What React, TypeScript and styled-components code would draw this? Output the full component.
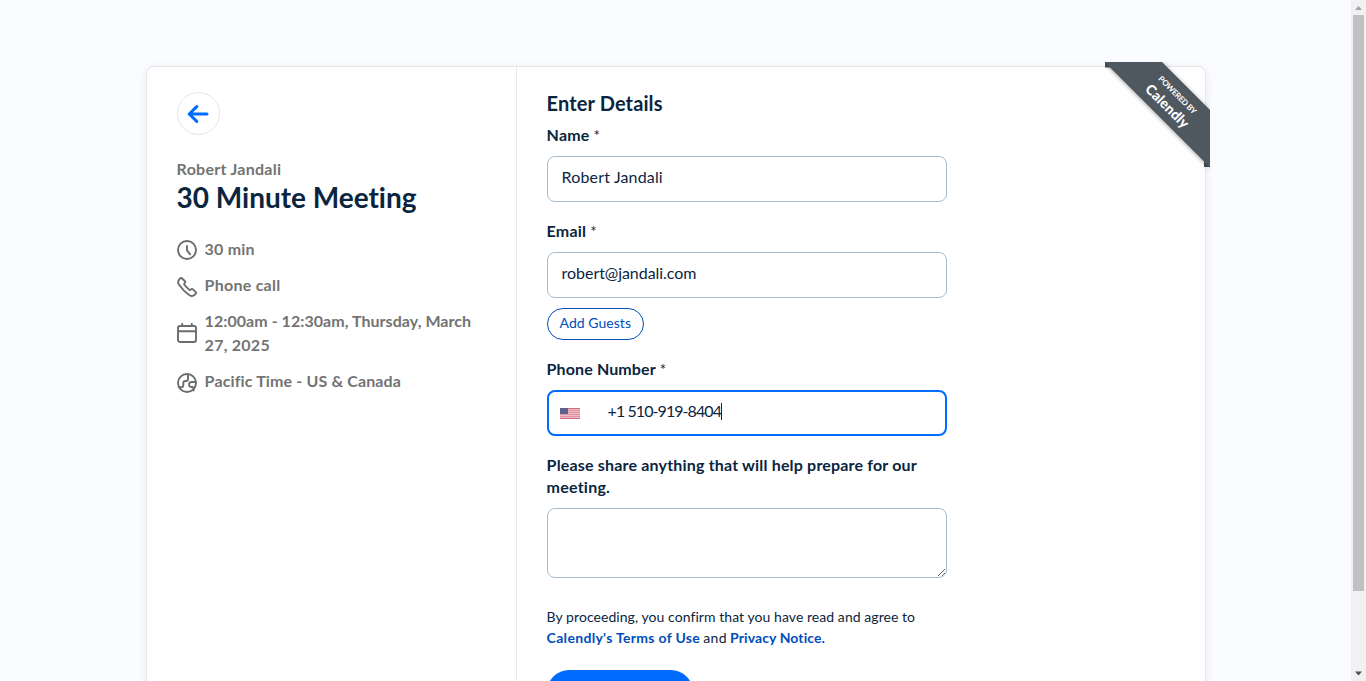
import React from "react";
import styled, { createGlobalStyle } from "styled-components";

const GlobalStyle = createGlobalStyle`
  *, *::before, *::after { box-sizing: border-box; }
  html, body { margin: 0; padding: 0; background: #fbfcff; overflow: hidden; }
  body { font-family: Lato, "Open Sans", sans-serif; font-size: 16px; color: #0b2540; }
`;

const Viewport = styled.div`
  display: flex;
  height: 681px;
  overflow: hidden;
`;

const Page = styled.main`
  flex: 1;
  display: flex;
  justify-content: center;
  align-items: flex-start;
  padding: 66px 0 0 1px;
  overflow: hidden;
`;

const Card = styled.section`
  position: relative;
  display: flex;
  width: 1060px;
  height: 720px;
  flex: none;
  background: #fff;
  border: 1px solid #e5e6e8;
  border-radius: 8px;
  box-shadow: 0 1px 8px rgba(0, 0, 0, 0.08);
`;

const Summary = styled.aside`
  width: 370px;
  flex: none;
  border-right: 1px solid #e7e7e7;
  padding: 25px 29px 0 30px;
`;

const BackButton = styled.button`
  display: flex;
  align-items: center;
  justify-content: center;
  width: 43px;
  height: 43px;
  padding: 0 2px 0 0;
  background: #fff;
  border: 1px solid #e6e6e6;
  border-radius: 50%;
`;

const Spaced = styled.span<{ $ls?: number }>`
  margin-left: -0.4px;
  letter-spacing: ${(p) => p.$ls ?? 0}px;
  white-space: nowrap;
`;

const Host = styled.div`
  margin-top: 23px;
  line-height: 22px;
  font-weight: 700;
  color: #737373;
`;

const Title = styled.h1`
  margin: 0;
  font-size: 28px;
  line-height: 34px;
  font-weight: 700;
  color: #0b2540;
`;

const Facts = styled.ul`
  display: flex;
  flex-direction: column;
  gap: 12px;
  margin: 23px 0 0;
  padding: 0;
  list-style: none;
`;

const Fact = styled.li`
  display: flex;
  align-items: center;
  gap: 8px;
  line-height: 24px;
  font-weight: 700;
  color: #737373;
`;

const FactIcon = styled.svg<{ $drop: number }>`
  flex: none;
  margin-top: ${(p) => p.$drop * 2}px;
`;

const Form = styled.form`
  width: 430px;
  padding: 24px 0 0 30px;
`;

const Heading = styled.h2`
  margin: 0;
  font-size: 20px;
  line-height: 24px;
  font-weight: 700;
`;

const Field = styled.div<{ $top: number }>`
  margin-top: ${(p) => p.$top}px;
`;

const Label = styled.label`
  display: block;
  margin-bottom: 10px;
  line-height: 22px;
  font-weight: 700;

  sup { margin-left: 4px; font-size: 15px; font-weight: 400; line-height: 0; vertical-align: baseline; }
`;

const Control = styled.div<{ $focused?: boolean }>`
  display: flex;
  align-items: center;
  height: 46px;
  padding: ${(p) => (p.$focused ? "0 12px 5px 11px" : "0 14px 5px")};
  border: ${(p) => (p.$focused ? "2px solid #006bff" : "1px solid #a6bbd1")};
  border-radius: 8px;
  background: #fff;
`;

const Flag = styled.svg`
  margin: 6px 28px 0 0;
  opacity: 0.7;
  flex: none;
`;

const Caret = styled.span`
  width: 1px;
  height: 17px;
  margin: 2px 0 0;
  background: #0b2540;
`;

const GuestButton = styled.button`
  display: block;
  height: 32px;
  width: 97px;
  margin-top: 10px;
  padding: 0 0 3px;
  font: 400 14px/20px Lato, sans-serif;
  color: #004eba;
  background: #fff;
  border: 1px solid #004eba;
  border-radius: 16px;
`;

const TextArea = styled.textarea`
  display: block;
  width: 400px;
  height: 70px;
  border: 1px solid #a6bbd1;
  border-radius: 8px;
  background: #fff;
  resize: vertical;
  outline: none;
`;

const Legal = styled.p`
  margin: 28px 0 0;
  font-size: 14px;
  line-height: 21px;

  a { color: #004eba; font-weight: 700; text-decoration: none; }
`;

const Submit = styled.button`
  display: block;
  width: 146px;
  height: 44px;
  margin-top: 22px;
  border: 0;
  border-radius: 22px;
  background: #006bff;
`;

const Ribbon = styled.svg`
  position: absolute;
  top: -5px;
  right: -5px;
  overflow: hidden;
`;

const ScrollTrack = styled.div`
  display: flex;
  flex-direction: column;
  align-items: center;
  justify-content: space-between;
  width: 15px;
  flex: none;
  background: #f1f1f1;
`;

const ScrollThumb = styled.div`
  width: 11px;
  height: 576px;
  margin-bottom: auto;
  background: #c1c1c1;
`;

const Stroke = ({ drop = 0, children }: { drop?: number; children: React.ReactNode }) => (
  <FactIcon $drop={drop} width="20" height="20" viewBox="0 0 20 20" fill="none" stroke="#6a6c6e" strokeWidth="1.9" strokeLinecap="round" strokeLinejoin="round">
    {children}
  </FactIcon>
);

const Lines = ({ items }: { items: [string, number][] }) => (
  <>
    {items.map(([text, ls], i) => (
      <React.Fragment key={text}>
        {i > 0 && <br />}
        <Spaced $ls={ls}>{text}</Spaced>
      </React.Fragment>
    ))}
  </>
);

export default function App() {
  return (
    <Viewport>
      <GlobalStyle />
      <Page>
        <Card>
          <Summary>
            <BackButton aria-label="Back">
              <svg width="22" height="20" viewBox="0 0 22 20" fill="none" stroke="#006bff" strokeWidth="3" strokeLinecap="round" strokeLinejoin="round">
                <path d="M20 10H2.2M9.8 2.6L2.2 10l7.6 7.4" />
              </svg>
            </BackButton>
            <Host><Spaced $ls={0.27}>Robert Jandali</Spaced></Host>
            <Title><Spaced $ls={-0.02}>30 Minute Meeting</Spaced></Title>
            <Facts>
              <Fact>
                <Stroke drop={1}><circle cx="10" cy="10" r="9" /><path d="M10 6v4.3l3.2 4" /></Stroke>
                <Spaced $ls={0.2}>30 min</Spaced>
              </Fact>
              <Fact>
                <Stroke drop={2}>
                  <path d="M12.5 18.2a4.4 4.4 0 0 0 5.4-.6l.6-.6a1.5 1.5 0 0 0 0-2.1l-2.5-2.5a1.5 1.5 0 0 0-2.1 0 1.5 1.5 0 0 1-2.1 0L7.7 8.2a1.5 1.5 0 0 1 0-2.1 1.5 1.5 0 0 0 0-2.1L5.2 1.5a1.5 1.5 0 0 0-2.1 0l-.6.6a4.4 4.4 0 0 0-.6 5.4 40 40 0 0 0 10.6 10.7z" />
                </Stroke>
                <Spaced $ls={0.25}>Phone call</Spaced>
              </Fact>
              <Fact>
                <Stroke><rect x="1" y="3" width="18" height="16" rx="2" /><path d="M1 8.2h18M5.2 .9V3M14.8 .9V3" /></Stroke>
                <div><Lines items={[["12:00am - 12:30am, Thursday, March", 0.05], ["27, 2025", 0.25]]} /></div>
              </Fact>
              <Fact>
                <Stroke drop={2}>
                  <circle cx="10" cy="10" r="9" />
                  <path d="M2 14.2h2.3a2 2 0 0 0 2-2V10a2 2 0 0 1 2-2h.7a2 2 0 0 0 2-2V1.3M18.8 9h-4.2a2.5 2.5 0 0 0 0 5h.6a1.3 1.3 0 0 1 1.3 1.5v2" />
                </Stroke>
                <Spaced $ls={0.14}>Pacific Time - US &amp; Canada</Spaced>
              </Fact>
            </Facts>
          </Summary>

          <Form>
            <Heading><Spaced $ls={0.12}>Enter Details</Spaced></Heading>
            <Field $top={9}>
              <Label><Spaced $ls={0.15}>Name</Spaced><sup>*</sup></Label>
              <Control><Spaced $ls={0.16}>Robert Jandali</Spaced></Control>
            </Field>
            <Field $top={18}>
              <Label><Spaced $ls={0.2}>Email</Spaced><sup>*</sup></Label>
              <Control><Spaced $ls={-0.05}>robert@jandali.com</Spaced></Control>
              <GuestButton type="button"><Spaced $ls={0.04}>Add Guests</Spaced></GuestButton>
            </Field>
            <Field $top={18}>
              <Label><Spaced $ls={0.12}>Phone Number</Spaced><sup>*</sup></Label>
              <Control $focused>
                <Flag width="20" height="11" viewBox="0 0 20 11">
                  <rect width="20" height="11" fill="#e6a0aa" />
                  <path d="M0 2.5h20M0 4.5h20M0 6.5h20M0 8.5h20" stroke="#d4667a" />
                  <path d="M0 .5h20M0 10.5h20" stroke="#bd3049" />
                  <rect width="8" height="6" fill="#1c1c62" />
                </Flag>
                <Spaced $ls={-0.93}>+1 510-919-8404</Spaced>
                <Caret />
              </Control>
            </Field>
            <Field $top={18}>
              <Label><Lines items={[["Please share anything that will help prepare for our", 0.18], ["meeting.", 0.22]]} /></Label>
              <TextArea />
            </Field>
            <Legal>
              <Spaced $ls={0.06}>By proceeding, you confirm that you have read and agree to</Spaced>
              <br />
              <a><Spaced $ls={0.31}>Calendly's Terms of Use</Spaced></a> <Spaced $ls={0.3}>and</Spaced> <a><Spaced $ls={0.1}>Privacy Notice.</Spaced></a>
            </Legal>
            <Submit type="button" aria-label="Schedule Event" />
          </Form>

          <Ribbon width="105" height="113" viewBox="0 0 105 113">
            <defs>
              <filter id="ribbonShadow" x="-10%" y="-10%" width="120%" height="120%">
                <feDropShadow dx="0" dy="1" stdDeviation="2" floodColor="#000" floodOpacity="0.35" />
              </filter>
            </defs>
            <path d="M0 0H5V5.5H0zM99 99h6v6h-6z" fill="#474f57" />
            <path d="M0 0H57L105 48V105L99 99.5L5 5.5z" fill="#50595f" filter="url(#ribbonShadow)" />
            <g fill="#fff" textAnchor="middle" fontFamily="Lato, sans-serif" fontWeight="700">
              <text transform="translate(70.5 35) rotate(45)" fontSize="8" textLength="50">POWERED BY</text>
              <text transform="translate(58.8 47.5) rotate(45)" fontSize="14" fontWeight="900" textLength="55">Calendly</text>
            </g>
          </Ribbon>
        </Card>
      </Page>
      <ScrollTrack>
        <svg width="15" height="15" viewBox="0 0 15 15"><path d="M4 10l3.5-4 3.5 4z" fill="#a3a3a3" /></svg>
        <ScrollThumb />
        <svg width="15" height="15" viewBox="0 0 15 15"><path d="M4 5.5l3.5 4 3.5-4z" fill="#505050" /></svg>
      </ScrollTrack>
    </Viewport>
  );
}
